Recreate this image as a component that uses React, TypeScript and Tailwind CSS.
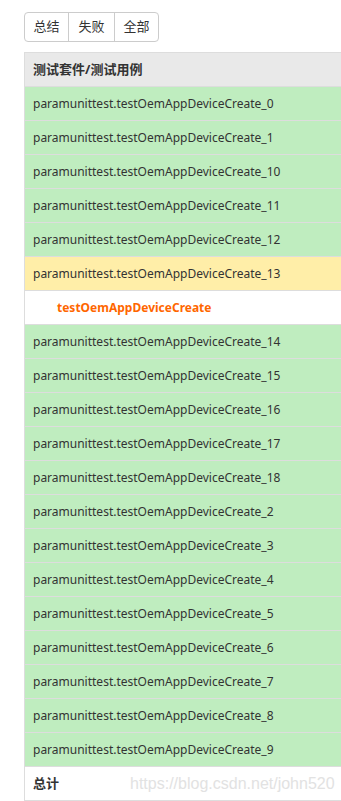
import React from "react";

const rows1 = ["0", "1", "10", "11", "12"];
const rows2 = ["14", "15", "16", "17", "18", "2", "3", "4", "5", "6", "7", "8", "9"];

const font = { fontFamily: '"Noto Sans", "Noto Sans CJK SC", sans-serif' };

function Row({ n, yellow }: { n: string; yellow?: boolean }) {
  return (
    <div
      className={`h-[34px] flex items-center pl-2 border-b border-[#dddddd] text-[12px] text-[#333333] ${
        yellow ? "bg-[#ffeea8]" : "bg-[#bfedbf]"
      }`}
    >
      paramunittest.testOemAppDeviceCreate_{n}
    </div>
  );
}

export default function App() {
  return (
    <div className="w-[341px] h-[801px] bg-white overflow-hidden" style={font}>
      <div className="pl-6 pt-3">
        <div className="flex w-max border border-[#cccccc] rounded-[4px] text-[13px] text-[#333333]">
          <div className="w-[44px] h-[28px] flex items-center justify-center border-r border-[#cccccc]">总结</div>
          <div className="w-[46px] h-[28px] flex items-center justify-center border-r border-[#cccccc]">失败</div>
          <div className="w-[43px] h-[28px] flex items-center justify-center">全部</div>
        </div>
      </div>
      <div className="ml-6 mt-[10px] border-l border-t border-[#dddddd]">
        <div className="h-[34px] flex items-center pl-2 bg-[#e9e9e9] border-b border-[#dddddd] text-[13px] font-bold text-[#333333]">
          测试套件/测试用例
        </div>
        {rows1.map((n) => (
          <Row key={n} n={n} />
        ))}
        <Row n="13" yellow />
        <div className="h-[34px] flex items-center pl-8 bg-white border-b border-[#dddddd] text-[12px] font-bold text-[#ff6600]">
          testOemAppDeviceCreate
        </div>
        {rows2.map((n) => (
          <Row key={n} n={n} />
        ))}
        <div className="h-[34px] flex items-center pl-2 bg-white border-b border-[#dddddd] text-[13px] font-bold text-[#333333]">
          <span>总计</span>
          <span
            className="ml-[71px] text-[16px] font-normal text-[#e2e2e2]"
            style={{ fontFamily: '"Liberation Sans", Arial, sans-serif' }}
          >
            https://blog.csdn.net/john520
          </span>
        </div>
      </div>
    </div>
  );
}
